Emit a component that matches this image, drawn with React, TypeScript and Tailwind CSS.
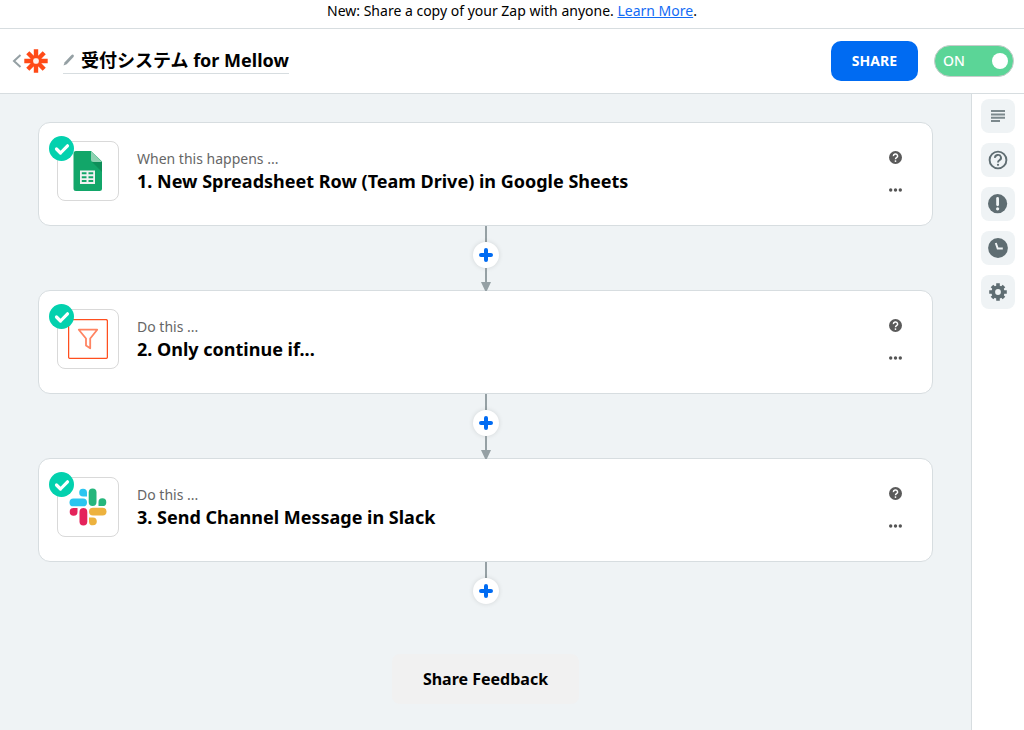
import { useState } from 'react';
import type { ReactNode } from 'react';

interface Step {
  id: number;
  hint: string;
  title: string;
  icon: ReactNode;
}

function SheetsIcon() {
  return (
    <svg width="30" height="40" viewBox="0 0 30 40" aria-hidden="true">
      <path d="M3 0H18L29 10.500V37.500A2.500 2.500 0 0 1 26.500 40H3A2.500 2.500 0 0 1 0.500 37.500V2.500A2.500 2.500 0 0 1 3 0Z" fill="#12a669" />
      <path d="M19 11L29 21V11Z" fill="#0d8f59" />
      <path d="M18 0L29 11H20.500A2.500 2.500 0 0 1 18 8.500Z" fill="#8ed1b1" />
      <path
        fillRule="evenodd"
        fill="#f1f1f1"
        d="M7 19.500H22V33H7ZM8.800 21.300V23.300H13.500V21.300ZM15.500 21.300V23.300H20.200V21.300ZM8.800 25.200V27.200H13.500V25.200ZM15.500 25.200V27.200H20.200V25.200ZM8.800 29.100V31.100H13.500V29.100ZM15.500 29.100V31.100H20.200V29.100Z"
      />
    </svg>
  );
}

function FilterIcon() {
  return (
    <svg width="40" height="40" viewBox="0 0 40 40" fill="none" stroke="#ff4f1f" aria-hidden="true">
      <rect x="0.600" y="0.600" width="38.800" height="38.800" rx="1.500" strokeWidth="1.300" />
      <path d="M10.800 10.700H29.200L22.200 19.500V29.300L18 26.500V19.500Z" stroke="#ff8462" strokeWidth="1.800" strokeLinejoin="round" />
    </svg>
  );
}

function SlackIcon() {
  return (
    <svg width="38" height="38" viewBox="0 0 38 38" aria-hidden="true">
      <g fill="#2bc5f0">
        <rect x="0.500" y="10.500" width="17.500" height="7.800" rx="3.900" />
        <path d="M18 8.500V4.400A3.900 3.900 0 1 0 14.200 8.500Z" />
      </g>
      <g fill="#25b67c">
        <rect x="19.700" y="0.500" width="7.800" height="17.500" rx="3.900" />
        <path d="M29.500 18H33.300A3.900 3.900 0 1 0 29.500 14.200Z" />
      </g>
      <g fill="#edb23e">
        <rect x="20" y="19.700" width="17.500" height="7.800" rx="3.900" />
        <path d="M20 29.500V33.400A3.900 3.900 0 1 0 23.800 29.500Z" />
      </g>
      <g fill="#e4235b">
        <rect x="10.500" y="20" width="7.800" height="17.500" rx="3.900" />
        <path d="M8.500 20H4.400A3.900 3.900 0 1 0 8.500 23.800Z" />
      </g>
    </svg>
  );
}

function ZapierLogo() {
  return (
    <svg width="24" height="24" viewBox="0 0 24 24" aria-hidden="true">
      <g fill="none" stroke="#ff4a17" strokeWidth="4.400">
        <path d="M12 0.300V23.700M0.300 12H23.700M3.800 3.800L20.200 20.200M20.200 3.800L3.800 20.200" />
      </g>
      <rect x="9.200" y="9.200" width="5.600" height="5.600" rx="2" fill="#fff1ec" />
    </svg>
  );
}

function HelpIcon() {
  return (
    <svg width="13" height="13" viewBox="0 0 13 13" aria-hidden="true">
      <circle cx="6.500" cy="6.500" r="6.500" fill="#5a5a5a" />
      <path d="M4.400 5.100A2.100 2 0 1 1 7.500 6.700Q6.500 7.300 6.500 8.200" fill="none" stroke="#fff" strokeWidth="1.500" />
      <circle cx="6.500" cy="10.100" r="0.900" fill="#fff" />
    </svg>
  );
}

function MoreIcon() {
  return (
    <svg width="13" height="4" viewBox="0 0 13 4" fill="#555" aria-hidden="true">
      <circle cx="1.700" cy="2" r="1.700" />
      <circle cx="6.500" cy="2" r="1.700" />
      <circle cx="11.300" cy="2" r="1.700" />
    </svg>
  );
}

const steps: Step[] = [
  { id: 1, hint: 'When this happens ...', title: '1. New Spreadsheet Row (Team Drive) in Google Sheets', icon: <SheetsIcon /> },
  { id: 2, hint: 'Do this ...', title: '2. Only continue if...', icon: <FilterIcon /> },
  { id: 3, hint: 'Do this ...', title: '3. Send Channel Message in Slack', icon: <SlackIcon /> },
];

const sidebarItems: { label: string; icon: ReactNode }[] = [
  {
    label: 'Outline',
    icon: (
      <svg width="20" height="20" viewBox="0 0 20 20" stroke="#7c898d" strokeWidth="2" aria-hidden="true">
        <path d="M3 5H17M3 8.400H17M3 11.700H17M3 15H12" />
      </svg>
    ),
  },
  {
    label: 'Help',
    icon: (
      <svg width="20" height="20" viewBox="0 0 20 20" fill="none" stroke="#5f6d72" strokeWidth="1.900" aria-hidden="true">
        <circle cx="10" cy="10" r="8.400" />
        <path d="M7 7.900A3 2.800 0 1 1 11.400 10.200Q10 11 10 12.600" />
        <circle cx="10" cy="14.800" r="1.100" fill="#5f6d72" stroke="none" />
      </svg>
    ),
  },
  {
    label: 'Alerts',
    icon: (
      <svg width="20" height="20" viewBox="0 0 20 20" aria-hidden="true">
        <circle cx="9.600" cy="9.700" r="9.600" fill="#5f6d72" />
        <path d="M9.600 4.500V10.800" stroke="#f0f4f5" strokeWidth="2.800" strokeLinecap="round" />
        <circle cx="9.600" cy="14.800" r="1.600" fill="#f0f4f5" />
      </svg>
    ),
  },
  {
    label: 'History',
    icon: (
      <svg width="20" height="20" viewBox="0 0 20 20" aria-hidden="true">
        <circle cx="10" cy="10" r="9.900" fill="#5f6d72" />
        <path d="M7.800 5L9.700 10.500H14.800" fill="none" stroke="#f0f4f5" strokeWidth="2" />
      </svg>
    ),
  },
  {
    label: 'Settings',
    icon: (
      <svg width="20" height="20" viewBox="0 0 20 20" aria-hidden="true">
        <g stroke="#5f6d72" strokeWidth="3.600">
          <path d="M10 1.200V18.800M1.200 10H18.800M4 4L16 16M16 4L4 16" />
        </g>
        <circle cx="10" cy="10" r="6.600" fill="#5f6d72" />
        <circle cx="10" cy="10" r="2.900" fill="#f0f4f5" />
      </svg>
    ),
  },
];

function StepCard({ step }: { step: Step }) {
  return (
    <section className="flex h-26 w-full items-start rounded-xl border border-[#d7dde0] bg-white pt-[18px] pr-[30px] pl-[18px]">
      <div className="relative flex h-15 w-[62px] shrink-0 items-center justify-center rounded-lg border border-[#d9d9d9]">
        {step.icon}
        <svg className="absolute -top-1.5 -left-[9px]" width="25" height="25" viewBox="0 0 25 25" aria-hidden="true">
          <circle cx="12.500" cy="12.500" r="12.500" fill="#03d1ae" />
          <path d="M7.500 13L11.500 17L18.500 9.800" fill="none" stroke="#fff" strokeWidth="3.200" strokeLinecap="round" strokeLinejoin="round" />
        </svg>
      </div>
      <div className="ml-[18px] min-w-0 flex-1 pt-2">
        <p className="text-sm leading-5 text-[#666]">{step.hint}</p>
        <h2 className="text-lg leading-6 font-bold">{step.title}</h2>
      </div>
      <div className="flex flex-col items-center gap-5 pt-2.5">
        <button type="button" aria-label="Step help" className="block"><HelpIcon /></button>
        <button type="button" aria-label="More actions" className="block py-1"><MoreIcon /></button>
      </div>
    </section>
  );
}

function Connector({ last }: { last: boolean }) {
  return (
    <div className="flex h-16 flex-col items-center">
      <div className="h-4 w-0.5 shrink-0 bg-[#95a0a4]" />
      <button
        type="button"
        aria-label="Add step"
        className="flex size-[26px] shrink-0 items-center justify-center rounded-full bg-white shadow-[0_0_5px_rgba(0,0,0,0.12)]"
      >
        <svg width="14" height="14" viewBox="0 0 14 14" stroke="#006bf2" strokeWidth="4" strokeLinecap="round" aria-hidden="true">
          <path d="M7 2V12M2 7H12" />
        </svg>
      </button>
      {!last && (
        <>
          <div className="h-3.5 w-0.5 shrink-0 bg-[#95a0a4]" />
          <svg width="10" height="9" viewBox="0 0 10 9" fill="#95a0a4" className="relative z-10 shrink-0" aria-hidden="true">
            <path d="M0 0H10L5.800 9H4.200Z" />
          </svg>
        </>
      )}
    </div>
  );
}

export default function App() {
  const [enabled, setEnabled] = useState(true);

  return (
    <div className="flex min-h-screen flex-col bg-white font-['Noto_Sans','Noto_Sans_CJK_JP',sans-serif] text-black">
      <div className="border-b border-[#d7dde0] pb-1.5 text-center text-sm leading-[22px]">
        New: Share a copy of your Zap with anyone.{' '}
        <a href="#learn-more" className="text-[#136bf5] underline">Learn More</a>.
      </div>

      <header className="flex h-[65px] items-center border-b border-[#d7dde0] pr-2.5 pl-3">
        <a href="#zaps" aria-label="Back to Zaps" className="flex items-center gap-0.5">
          <svg width="10" height="14" viewBox="0 0 10 14" fill="none" stroke="#95a0a4" strokeWidth="2" aria-hidden="true">
            <path d="M8.500 1L2 7L8.500 13" />
          </svg>
          <ZapierLogo />
        </a>
        <button type="button" className="ml-[15px] flex items-center gap-1.5 border-b border-[#d7dde0] pb-0.5 text-lg leading-[22px] font-bold">
          <svg width="12" height="12" viewBox="0 0 12 12" fill="#95a0a4" aria-hidden="true">
            <path d="M0.500 11.500L1.700 8.200L8.300 1.200Q9.300 0.200 10.300 0.800Q11.500 1.700 10.500 3L3.700 10.300Z" />
          </svg>
          受付システム for Mellow
        </button>
        <button type="button" className="ml-auto h-10 rounded-[10px] bg-[#006bf2] px-[21px] text-sm font-bold text-white">
          SHARE
        </button>
        <label className="ml-4 flex h-8 w-20 cursor-pointer items-center justify-between rounded-full border border-[#c8cccb] bg-[#5bd597] pr-[5px] pl-2 text-sm font-medium text-white">
          <input
            type="checkbox"
            role="switch"
            className="sr-only"
            checked={enabled}
            onChange={(e) => setEnabled(e.target.checked)}
          />
          {enabled ? 'ON' : 'OFF'}
          <span className="size-4 rounded-full bg-white" />
        </label>
      </header>

      <div className="flex flex-1">
        <main className="flex flex-1 flex-col items-center bg-[#eff3f5] px-[38px] pt-7">
          {steps.map((step, i) => (
            <div key={step.id} className="w-full">
              <StepCard step={step} />
              <Connector last={i === steps.length - 1} />
            </div>
          ))}
          <button type="button" className="mt-7 h-[50px] rounded-lg bg-[#f1f1f1] px-[31px] font-bold">
            Share Feedback
          </button>
        </main>

        <aside className="flex w-[53px] shrink-0 flex-col items-center gap-2.5 border-l border-[#d7dde0] pt-[5px]">
          {sidebarItems.map((item) => (
            <button
              key={item.label}
              type="button"
              aria-label={item.label}
              className="flex size-[34px] items-center justify-center rounded-lg bg-[#eff3f5]"
            >
              {item.icon}
            </button>
          ))}
        </aside>
      </div>
    </div>
  );
}
